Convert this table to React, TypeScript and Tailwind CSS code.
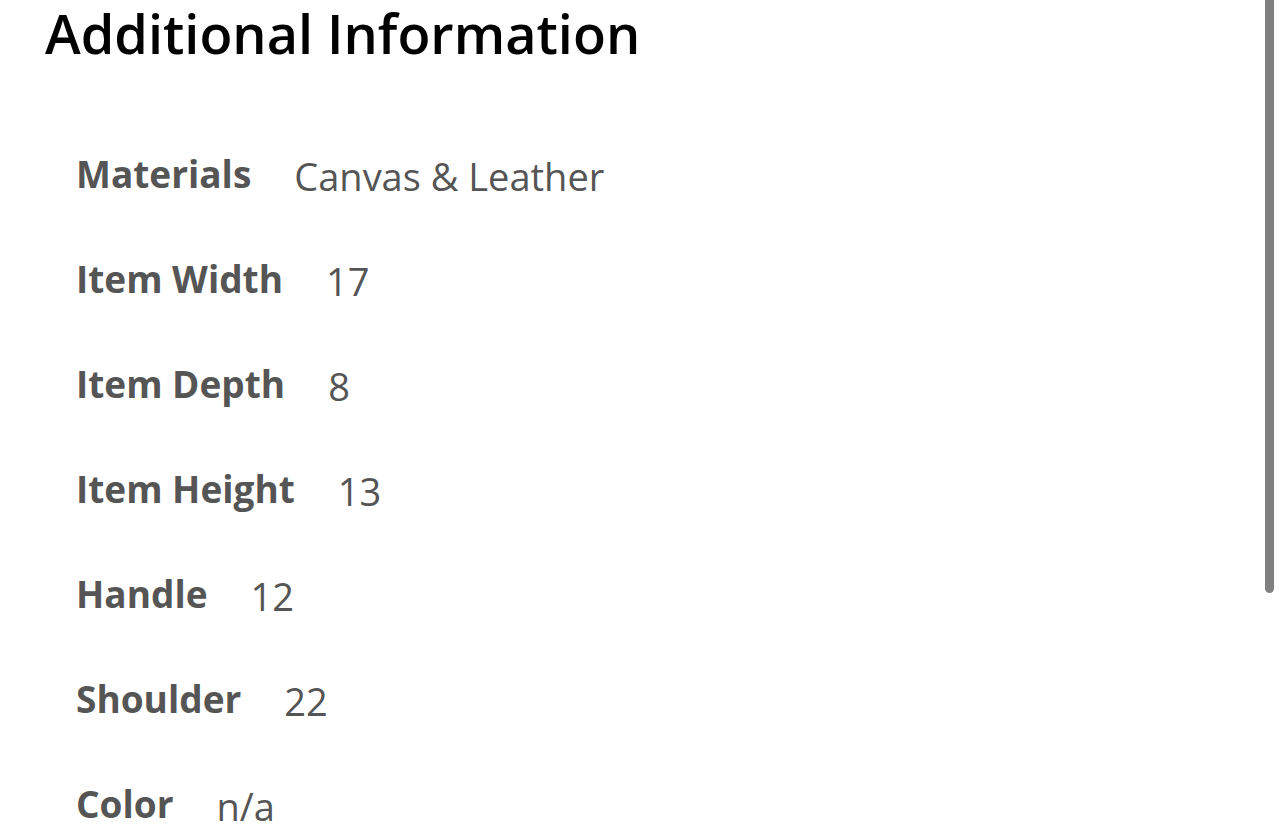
const rows: [string, string][] = [
  ["Materials", "Canvas & Leather"],
  ["Item Width", "17"],
  ["Item Depth", "8"],
  ["Item Height", "13"],
  ["Handle", "12"],
  ["Shoulder", "22"],
  ["Color", "n/a"],
];

export default function App() {
  return (
    <div className="relative h-[838px] w-[1284px] overflow-hidden bg-white font-['Open_Sans',sans-serif]">
      <h2 className="pl-[45px] pt-[1px] text-[54px] font-semibold leading-[64px] text-black">
        Additional Information
      </h2>
      <div className="mt-[88px] flex flex-col pl-[76px]">
        {rows.map(([label, value]) => (
          <div key={label} className="flex h-[105px] items-baseline gap-[43px] leading-[40px] text-[#555]">
            <span className="text-[37px] font-bold">{label}</span>
            <span className="relative top-[3px] text-[38px]">{value}</span>
          </div>
        ))}
      </div>
      {/* scrollbar thumb */}
      <div className="absolute right-[10px] top-0 h-[593px] w-[9px] rounded-b-full bg-[#808080]" />
    </div>
  );
}
